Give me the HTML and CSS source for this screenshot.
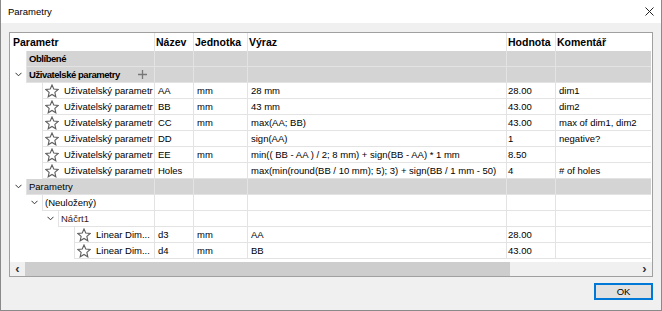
FILE: index.html
```html
<!DOCTYPE html>
<html lang="cs">
<head>
  <meta charset="UTF-8" />
  <title>Parametry</title>
  <link rel="stylesheet" href="styles.css">
</head>
<body>
  <div class="dialog">
    <div class="titlebar">
      <span class="title">Parametry</span>
      <svg class="close" width="9" height="9" viewBox="0 0 9 9"><path d="M0.5 0.5 L8.5 8.5 M8.5 0.5 L0.5 8.5" stroke="#222" stroke-width="1" fill="none"/></svg>
    </div>
    <div class="content">
      <div class="grid">
        <div class="row head">
          <div class="hd">Parametr</div>
          <div>Název</div>
          <div>Jednotka</div>
          <div>Výraz</div>
          <div class="val">Hodnota</div>
          <div>Komentář</div>
        </div>

        <div class="row cat">
          <div class="tree"><span class="tw"></span><span class="lbl semi">Oblíbené</span></div>
          <div></div><div></div><div></div><div></div><div></div>
        </div>
        <div class="row cat">
          <div class="tree"><span class="tw"><svg class="chev" width="7" height="5" viewBox="0 0 7 5"><path d="M0.5 0.8 L3.5 3.8 L6.5 0.8" stroke="#333" fill="none"/></svg></span><span class="lbl semi">Uživatelské parametry<svg class="plus" width="9" height="9" viewBox="0 0 9 9"><path d="M4.5 0 V9 M0 4.5 H9" stroke="#777" stroke-width="1.3"/></svg></span></div>
          <div></div><div></div><div></div><div></div><div></div>
        </div>

        <div class="row">
          <div class="tree l1"><span class="tw"></span><span class="lbl"><svg class="star" width="14" height="14" viewBox="0 0 14 14"><polygon points="7,1 8.76,5.07 13.18,5.49 9.85,8.43 10.82,12.76 7,10.5 3.18,12.76 4.15,8.43 0.82,5.49 5.24,5.07" fill="#fff" stroke="#5e5e5e" stroke-width="1.1"/></svg>Uživatelský parametr</span></div>
          <div>AA</div><div>mm</div><div>28 mm</div><div class="val">28.00</div><div>dim1</div>
        </div>
        <div class="row">
          <div class="tree l1"><span class="tw"></span><span class="lbl"><svg class="star" width="14" height="14" viewBox="0 0 14 14"><polygon points="7,1 8.76,5.07 13.18,5.49 9.85,8.43 10.82,12.76 7,10.5 3.18,12.76 4.15,8.43 0.82,5.49 5.24,5.07" fill="#fff" stroke="#5e5e5e" stroke-width="1.1"/></svg>Uživatelský parametr</span></div>
          <div>BB</div><div>mm</div><div>43 mm</div><div class="val">43.00</div><div>dim2</div>
        </div>
        <div class="row">
          <div class="tree l1"><span class="tw"></span><span class="lbl"><svg class="star" width="14" height="14" viewBox="0 0 14 14"><polygon points="7,1 8.76,5.07 13.18,5.49 9.85,8.43 10.82,12.76 7,10.5 3.18,12.76 4.15,8.43 0.82,5.49 5.24,5.07" fill="#fff" stroke="#5e5e5e" stroke-width="1.1"/></svg>Uživatelský parametr</span></div>
          <div>CC</div><div>mm</div><div>max(AA; BB)</div><div class="val">43.00</div><div>max of dim1, dim2</div>
        </div>
        <div class="row">
          <div class="tree l1"><span class="tw"></span><span class="lbl"><svg class="star" width="14" height="14" viewBox="0 0 14 14"><polygon points="7,1 8.76,5.07 13.18,5.49 9.85,8.43 10.82,12.76 7,10.5 3.18,12.76 4.15,8.43 0.82,5.49 5.24,5.07" fill="#fff" stroke="#5e5e5e" stroke-width="1.1"/></svg>Uživatelský parametr</span></div>
          <div>DD</div><div></div><div>sign(AA)</div><div class="val">1</div><div>negative?</div>
        </div>
        <div class="row">
          <div class="tree l1"><span class="tw"></span><span class="lbl"><svg class="star" width="14" height="14" viewBox="0 0 14 14"><polygon points="7,1 8.76,5.07 13.18,5.49 9.85,8.43 10.82,12.76 7,10.5 3.18,12.76 4.15,8.43 0.82,5.49 5.24,5.07" fill="#fff" stroke="#5e5e5e" stroke-width="1.1"/></svg>Uživatelský parametr</span></div>
          <div>EE</div><div>mm</div><div>min(( BB - AA ) / 2; 8 mm) + sign(BB - AA) * 1 mm</div><div class="val">8.50</div><div></div>
        </div>
        <div class="row">
          <div class="tree l1"><span class="tw"></span><span class="lbl"><svg class="star" width="14" height="14" viewBox="0 0 14 14"><polygon points="7,1 8.76,5.07 13.18,5.49 9.85,8.43 10.82,12.76 7,10.5 3.18,12.76 4.15,8.43 0.82,5.49 5.24,5.07" fill="#fff" stroke="#5e5e5e" stroke-width="1.1"/></svg>Uživatelský parametr</span></div>
          <div>Holes</div><div></div><div>max(min(round(BB / 10 mm); 5); 3) + sign(BB / 1 mm - 50)</div><div class="val">4</div><div># of holes</div>
        </div>

        <div class="row cat">
          <div class="tree"><span class="tw"><svg class="chev" width="7" height="5" viewBox="0 0 7 5"><path d="M0.5 0.8 L3.5 3.8 L6.5 0.8" stroke="#333" fill="none"/></svg></span><span class="lbl">Parametry</span></div>
          <div></div><div></div><div></div><div></div><div></div>
        </div>
        <div class="row">
          <div class="tree l1"><span class="tw"><svg class="chev" width="7" height="5" viewBox="0 0 7 5"><path d="M0.5 0.8 L3.5 3.8 L6.5 0.8" stroke="#333" fill="none"/></svg></span><span class="lbl">(Neuložený)</span></div>
          <div></div><div></div><div></div><div class="val"></div><div></div>
        </div>
        <div class="row">
          <div class="tree l2"><span class="tw"><svg class="chev" width="7" height="5" viewBox="0 0 7 5"><path d="M0.5 0.8 L3.5 3.8 L6.5 0.8" stroke="#333" fill="none"/></svg></span><span class="lbl sketch">Náčrt1</span></div>
          <div></div><div></div><div></div><div class="val"></div><div></div>
        </div>
        <div class="row">
          <div class="tree l3"><span class="tw"></span><span class="lbl"><svg class="star" width="14" height="14" viewBox="0 0 14 14"><polygon points="7,1 8.76,5.07 13.18,5.49 9.85,8.43 10.82,12.76 7,10.5 3.18,12.76 4.15,8.43 0.82,5.49 5.24,5.07" fill="#fff" stroke="#5e5e5e" stroke-width="1.1"/></svg>Linear Dim...</span></div>
          <div>d3</div><div>mm</div><div>AA</div><div class="val">28.00</div><div></div>
        </div>
        <div class="row">
          <div class="tree l3"><span class="tw"></span><span class="lbl"><svg class="star" width="14" height="14" viewBox="0 0 14 14"><polygon points="7,1 8.76,5.07 13.18,5.49 9.85,8.43 10.82,12.76 7,10.5 3.18,12.76 4.15,8.43 0.82,5.49 5.24,5.07" fill="#fff" stroke="#5e5e5e" stroke-width="1.1"/></svg>Linear Dim...</span></div>
          <div>d4</div><div>mm</div><div>BB</div><div class="val">43.00</div><div></div>
        </div>

        <div class="hscroll">
          <span class="arrow">&lsaquo;</span>
          <span class="thumb"></span>
          <span class="track"></span>
          <span class="arrow">&rsaquo;</span>
        </div>
      </div>
      <div class="buttons">
        <button class="ok">OK</button>
      </div>
    </div>
  </div>
</body>
</html>
```

FILE: styles.css
```css
body {
  margin: 0;
  font-family: "Liberation Sans", Arial, sans-serif;
  font-size: 9.5px;
  color: #000;
}
.dialog {
  width: 662px;
  height: 311px;
  box-sizing: border-box;
  border: 1px solid #8a8a8a;
  border-top: none;
  background: #f0f0f0;
}
.titlebar {
  height: 23px;
  background: #fff;
  display: flex;
  align-items: center;
  justify-content: space-between;
  padding: 0 7px 0 7px;
}
.title {
  font-size: 9.5px;
}
.close {
  display: block;
}
.content {
  padding: 9px 8px 0 8px;
}
.grid {
  border: 1px solid #a0a0a0;
  background: #fff;
}
.row {
  display: grid;
  grid-template-columns: 145px 39px 54px 259px 49px 95px;
  height: 16px;
}
.row > div {
  box-sizing: border-box;
  height: 16px;
  border-right: 1px solid #e3e3e3;
  border-bottom: 1px solid #e3e3e3;
  padding-left: 3px;
  line-height: 15px;
  white-space: nowrap;
  overflow: hidden;
}
.row > div:last-child {
  border-right: none;
}
.row > .val {
  padding-left: 1px;
}
.row.head {
  height: 18px;
}
.row.head > div {
  height: 18px;
  line-height: 18px;
  border-bottom: none;
  font-weight: bold;
  font-size: 10.5px;
  padding-left: 1px;
}
.row.head > .hd {
  padding-left: 3px;
}
.row > .tree {
  display: flex;
  padding-left: 0;
  border-bottom: none;
}
.tree.l1 { padding-left: 16px; }
.tree.l2 { padding-left: 32px; }
.tree.l3 { padding-left: 48px; }
.tw {
  width: 16px;
  flex: none;
  display: flex;
  align-items: center;
  justify-content: center;
}
.chev {
  display: block;
  margin-top: -1px;
}
.lbl {
  flex: 1;
  display: flex;
  align-items: center;
  border-left: 1px solid #e3e3e3;
  border-bottom: 1px solid #e3e3e3;
  padding-left: 2px;
  white-space: nowrap;
}
.cat > div,
.cat .lbl {
  background: #d4d4d4;
}
.cat > .tree {
  background: #fff;
}
.semi {
  font-weight: bold;
  font-size: 9.5px;
  letter-spacing: -0.45px;
}
.sketch {
  color: #3a1a1a;
}
.star {
  flex: none;
  margin-right: 5px;
}
.plus {
  margin-left: auto;
  margin-right: 7px;
}
.hscroll {
  display: flex;
  height: 17px;
  background: #f0f0f0;
  border-top: 3px solid #fff;
  box-sizing: border-box;
}
.arrow {
  width: 15px;
  flex: none;
  text-align: center;
  font-size: 13px;
  line-height: 13px;
  color: #333;
  font-weight: bold;
}
.thumb {
  width: 485px;
  background: #cdcdcd;
}
.track {
  flex: 1;
}
.buttons {
  display: flex;
  justify-content: flex-end;
  padding-top: 6px;
}
.ok {
  width: 59px;
  height: 17px;
  padding: 0;
  font-family: "Liberation Sans", Arial, sans-serif;
  font-size: 9.5px;
  background: #e1e1e1;
  border: 1px solid #0078d7;
  box-shadow: inset 0 0 0 1px #0078d7;
  color: #000;
}
```
